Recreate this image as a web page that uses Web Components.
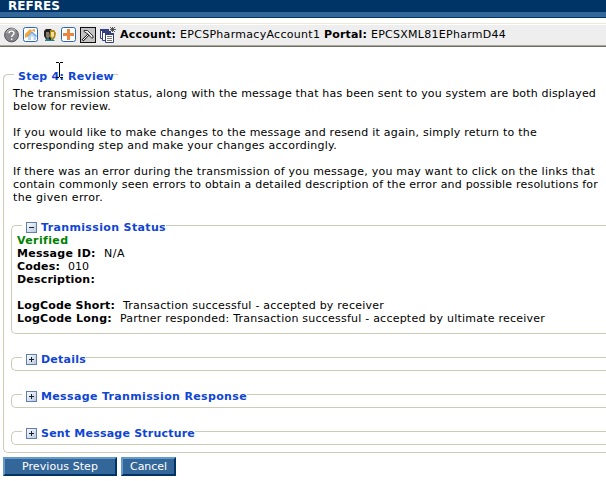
<!DOCTYPE html>
<html lang="en"><head><meta charset="utf-8"><title>Review</title>
<style>html,body{margin:0;background:#fff}body{width:606px;height:481px;overflow:hidden;font:11px/13px Verdana,"DejaVu Sans",sans-serif;color:#000}</style></head><body>
<review-page></review-page>
<script>
class Base extends HTMLElement{
  constructor(){super();this.attachShadow({mode:'open'}).innerHTML=this.view();}
  view(){return '';}
}
/* A single line of text whose tracking is adjusted to a given width. */
customElements.define('text-run',class extends Base{
  view(){return `<style>:host{display:inline-block;white-space:pre;height:13px;line-height:13px;vertical-align:top}span{display:inline-block}</style><span><slot></slot></span>`;}
  connectedCallback(){
    const w=+this.getAttribute('w');if(!w)return;
    const s=this.shadowRoot.querySelector('span'),n=this.textContent.length;
    s.style.letterSpacing=((w-s.getBoundingClientRect().width)/n)+'px';
    this.style.width=w+'px';
  }
});
customElements.define('title-band',class extends Base{
  view(){return `<style>:host{display:flex;height:18px;box-sizing:border-box;background:linear-gradient(#036 0 12px,#369 12px 17px,#036 17px);color:#fff;font-weight:bold;font-size:12px;padding-left:8px}</style><text-run w="52">REFRES</text-run>`;}
});
const ICONS={
help:`<circle cx="7.500" cy="8" r="6.900" fill="#85858b" stroke="#55555c" stroke-width="1"/><path d="M2.500 6a6 6 0 0 1 9-3" fill="none" stroke="#b5b5b8" stroke-width="1.200"/><path d="M5 6.200C5 3.400 10 3.400 10 6.200C10 8 7.700 8 7.700 10M7.700 11.400v1.600" fill="none" stroke="#fff" stroke-width="1.400"/>`,
home:`<rect x=".5" y=".5" width="14" height="14" rx="2" fill="#fff" stroke="#2a68b4"/><path d="M5 8v5h8V8L9 5z" fill="#b9d2ee"/><path d="M4 9.500L9 5L13.500 9.500" fill="none" stroke="#6ba5dc" stroke-width="1.200"/><path d="M2 7L7 2l2 2-5 6-2 1zM8 3l4-1v3z" fill="#f6a535"/><rect x="8" y="9.500" width="2.500" height="3.500" fill="#fff"/>`,
people:`<path d="M1 4l2-2h5l2 3v5l-3 4H4L1 9z" fill="#222"/><path d="M3 5h3l1 4-2 3-2-2z" fill="#8a7a6a"/><path d="M7 3h4l2 3-1 5-3 2-2-3z" fill="#a98a15"/><path d="M8 5h3v4l-2 2-1-2z" fill="#f4df9a"/><path d="M2 13l3-2 2 2 3-1 2 2H2z" fill="#278184"/>`,
plus:`<rect x=".5" y=".5" width="14" height="14" rx="2" fill="#fff" stroke="#2a68b4"/><path d="M7.500 2v11M2 7.500h11" stroke="#e98640" stroke-width="3"/>`,
hammer:`<rect x=".5" y=".5" width="15" height="15" fill="#c4c4c4" stroke="#111"/><path d="M2.500 13.500L9 7" stroke="#222" stroke-width="2.400"/><path d="M3 13L9 7" stroke="#fff"/><path d="M4 3.500h3.500L13 9v2h-1.500L8.500 7.500 4 4.500z" fill="#eee" stroke="#222" stroke-width=".9"/>`,
pages:`<g stroke="#35417e" fill="#fff"><path d="M.5 2.500h8v9h-8z"/><path d="M2.500 4.500h8v9h-8z"/><path d="M5.500 6.500h8v9h-8z"/></g><path d="M0 2h9v2H0zM2 4h9v2H2zM5 6h9v2H5z" fill="#35417e"/><path d="M7 9.500h5M7 11.500h5M7 13.500h5" stroke="#777"/><path d="M10 0l5 5M15 0l-5 5M12.500 0v5M10 2.500h6" stroke="#333" stroke-width=".8"/>`};
customElements.define('tool-icon',class extends HTMLElement{
  connectedCallback(){this.attachShadow({mode:'open'}).innerHTML=`<style>:host{display:block;width:16px;height:16px}svg{display:block}</style><svg width="16" height="16" viewBox="0 0 16 16">${ICONS[this.getAttribute('name')]}</svg>`;}
});
customElements.define('tool-strip',class extends Base{
  view(){return `<style>:host{display:flex;box-sizing:border-box;height:24px;margin-top:5px;border-top:1px solid #ece9d8;border-bottom:1px solid #706f64;background:linear-gradient(#fff 0 1px,#eee 1px 21px,#aca899 21px);padding:3px 0 0 4px}
.icons{display:grid;grid-template-columns:19px 20px 18px 19px 20px 20px}.t{margin-top:1px}</style>
<div class="icons"><tool-icon name="help"></tool-icon><tool-icon name="home"></tool-icon><tool-icon name="people"></tool-icon><tool-icon name="plus"></tool-icon><tool-icon name="hammer"></tool-icon><tool-icon name="pages"></tool-icon></div>
<div class="t"><text-run w="60"><b>Account: </b></text-run><text-run w="144">EPCSPharmacyAccount1 </text-run><text-run w="47"><b>Portal: </b></text-run><text-run w="135">EPCSXML81EPharmD44</text-run></div>`;}
});
customElements.define('toggle-box',class extends HTMLElement{
  connectedCallback(){this.attachShadow({mode:'open'}).innerHTML=`<style>:host{display:block;width:11px;height:11px}svg{display:block}</style><svg width="11" height="11"><defs><linearGradient id="g" x2="1" y2="1"><stop stop-color="#fff"/><stop offset="1" stop-color="#b8c4dc"/></linearGradient></defs><rect x=".5" y=".5" width="10" height="10" fill="url(#g)" stroke="#5f7fae"/><path d="M3 5.500h5${this.hasAttribute('open')?'':'M5.500 3v5'}" stroke="#123" stroke-width="1"/></svg>`;}
});
/* Bordered group with its legend set into the top rule; "short" ends the rule just past the legend. */
customElements.define('group-box',class extends Base{
  view(){return `<style>:host{display:block;position:relative;box-sizing:border-box;border:1px solid #ccccb8;border-right:0;border-radius:5px 0 0 5px}
:host([short]){border-top-color:transparent}
:host([short])::before{content:"";position:absolute;left:-1px;top:-1px;width:115px;height:10px;box-sizing:border-box;border:solid #ccccb8;border-width:1px 0 0 1px;border-top-left-radius:5px}
.legend{position:absolute;top:-5px;left:10px;display:flex;gap:4px;background:#fff;padding-left:4px;color:#0f45d3;font-weight:bold;height:13px}
::slotted(toggle-box){margin-top:1px}</style><div class="legend"><slot name="legend"></slot></div><slot></slot>`;}
});
customElements.define('push-button',class extends Base{
  view(){return `<style>:host{display:block;box-sizing:border-box;height:19px;background:#369;border:2px solid;border-color:#69c #036 #036 #69c;color:#fff;text-align:center;padding-top:1px}</style><slot></slot>`;}
});
customElements.define('text-cursor',class extends Base{
  view(){return `<style>:host{position:absolute;left:56px;top:62px;width:7px;height:16px}svg{display:block}</style><svg width="7" height="16"><path d="M0 .5h3M4 .5h3M3.500 1v14M0 15.500h3M4 15.500h3" stroke="#000" fill="none"/></svg>`;}
});
customElements.define('review-page',class extends Base{
  view(){return `<style>:host{display:block;position:relative}
.step{margin:27px 0 0 3px;height:379px;padding:12px 0 0 7px}
.copy{padding-left:2px;display:grid;row-gap:13px;margin-bottom:21px}.copy div,.status{display:flex;flex-direction:column}
.status{padding:8px 0 0 5px}group-box.in{margin-bottom:23px;height:14px}group-box.main{height:109px}.ok{color:#008000}.gap{margin-top:13px}
.buttons{display:grid;grid-template-columns:114px 55px;gap:4px;margin:4px 0 0 3px}
</style>
<title-band></title-band><tool-strip></tool-strip>
<group-box class="step" short><text-run slot="legend" w="96">Step 4: Review</text-run>
<div class="copy"><div><text-run w="583">The transmission status, along with the message that has been sent to you system are both displayed</text-run><text-run w="98">below for review.</text-run></div>
<div><text-run w="524">If you would like to make changes to the message and resend it again, simply return to the</text-run><text-run w="324">corresponding step and make your changes accordingly.</text-run></div>
<div><text-run w="582">If there was an error during the transmission of you message, you may want to click on the links that</text-run><text-run w="585">contain commonly seen errors to obtain a detailed description of the error and possible resolutions for</text-run><text-run w="90">the given error.</text-run></div></div>
<group-box class="in main"><toggle-box slot="legend" open></toggle-box><text-run slot="legend" w="125">Tranmission Status</text-run>
<div class="status"><text-run class="ok" w="51"><b>Verified</b></text-run>
<div><text-run w="87"><b>Message ID:  </b></text-run><text-run w="21">N/A</text-run></div>
<div><text-run w="51"><b>Codes:  </b></text-run><text-run w="21">010</text-run></div>
<text-run w="78"><b>Description:</b></text-run>
<div class="gap"><text-run w="106"><b>LogCode Short:  </b></text-run><text-run w="261">Transaction successful - accepted by receiver</text-run></div>
<div><text-run w="103"><b>LogCode Long:  </b></text-run><text-run w="425">Partner responded: Transaction successful - accepted by ultimate receiver</text-run></div></div></group-box>
<group-box class="in"><toggle-box slot="legend"></toggle-box><text-run slot="legend" w="45">Details</text-run></group-box>
<group-box class="in"><toggle-box slot="legend"></toggle-box><text-run slot="legend" w="206">Message Tranmission Response</text-run></group-box>
<group-box class="in"><toggle-box slot="legend"></toggle-box><text-run slot="legend" w="154">Sent Message Structure</text-run></group-box>
</group-box>
<div class="buttons"><push-button><text-run w="76">Previous Step</text-run></push-button><push-button><text-run w="37">Cancel</text-run></push-button></div>
<text-cursor></text-cursor>`;}
});
</script></body></html>
